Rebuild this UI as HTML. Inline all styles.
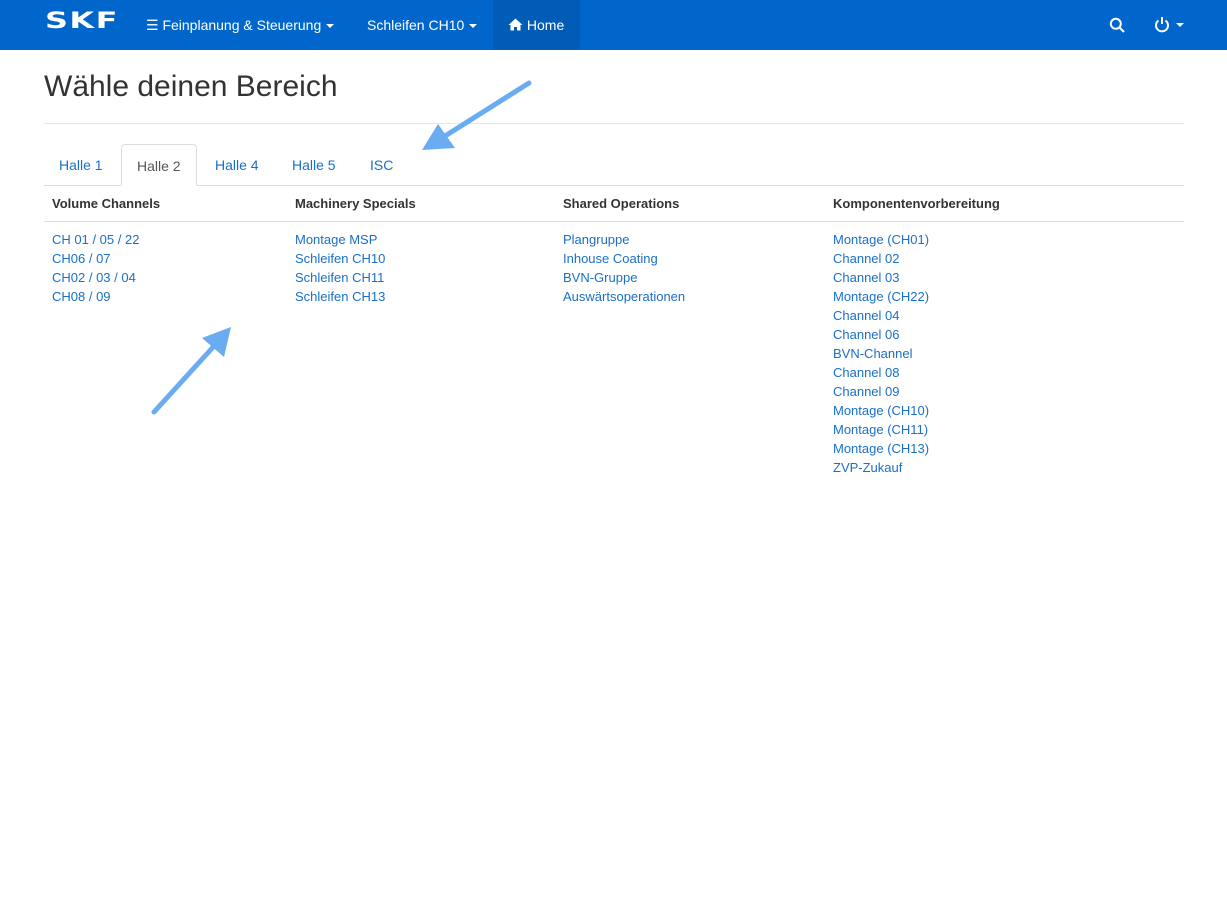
<!DOCTYPE html>
<html><head><meta charset="utf-8"><style>
*{box-sizing:border-box}
body{margin:0;font-family:"Liberation Sans",Arial,sans-serif;font-size:13px;color:#333;background:#fff;width:1227px;height:918px;overflow:hidden;position:relative}
.nav{height:50px;background:#0066cc;position:relative;color:#fff;font-size:14px}
.nav span{position:absolute;top:16px;line-height:18px;white-space:nowrap}
.home{position:absolute;left:493px;top:0;width:87px;height:50px;background:#005cb7}
.caret{display:inline-block;border-left:4px solid transparent;border-right:4px solid transparent;border-top:4px solid #fff;vertical-align:middle;margin-left:5px}
h1{position:absolute;left:44px;top:70px;margin:0;font-weight:400;font-size:30px;color:#333}
.hr{position:absolute;left:44px;right:43px;top:123px;border-top:1px solid #e5e5e5}
.tabs{position:absolute;left:44px;right:43px;top:144px;height:42px;border-bottom:1px solid #ddd}
.tab{position:absolute;top:0;height:42px;line-height:42px;font-size:14px;color:#1a6fc9;padding:0 15px}
.tab.act{border:1px solid #ddd;border-bottom-color:#fff;border-radius:4px 4px 0 0;color:#555;background:#fff;height:42px}
.th{position:absolute;top:196px;font-weight:bold;font-size:13px;color:#333}
.tline{position:absolute;left:44px;right:43px;top:221px;border-top:1px solid #ddd}
.col{position:absolute;top:230px;line-height:19px;font-size:13px}
.col a{display:block;color:#1a6fc9;text-decoration:none}
</style></head><body>
<div class="nav">
<div class="home"></div>
<span style="left:45px;top:13px;font-weight:900;font-size:22px;font-family:'DejaVu Sans',sans-serif;letter-spacing:1px;transform:scaleX(1.45);transform-origin:left">SKF</span>
<span style="left:146px">☰ Feinplanung &amp; Steuerung<i class="caret"></i></span>
<span style="left:367px">Schleifen CH10<i class="caret"></i></span>
<span style="left:508px">
<svg width="15" height="13" viewBox="0 0 15 13" style="vertical-align:-1px"><path d="M7.5 0.5L0.5 7H2.5V12.5H6V9H9V12.5H12.5V7H14.5Z" fill="#fff"/></svg> Home</span>
<svg style="position:absolute;left:1109px;top:17px" width="17" height="17" viewBox="0 0 17 17"><circle cx="6.8" cy="6.8" r="5" fill="none" stroke="#fff" stroke-width="2"/><line x1="10.5" y1="10.5" x2="15" y2="15" stroke="#fff" stroke-width="2.2"/></svg>
<svg style="position:absolute;left:1154px;top:16px" width="16" height="17" viewBox="0 0 16 17"><path d="M4.5 4.5A6 6 0 1 0 11.5 4.5" fill="none" stroke="#fff" stroke-width="2"/><line x1="8" y1="1" x2="8" y2="8" stroke="#fff" stroke-width="2"/></svg>
<i class="caret" style="position:absolute;left:1176px;top:23px;margin:0"></i>
</div>
<h1>Wähle deinen Bereich</h1>
<div class="hr"></div>
<div class="tabs">
<div class="tab" style="left:0">Halle 1</div>
<div class="tab act" style="left:77px">Halle 2</div>
<div class="tab" style="left:156px">Halle 4</div>
<div class="tab" style="left:233px">Halle 5</div>
<div class="tab" style="left:311px">ISC</div>
</div>
<div class="th" style="left:52px">Volume Channels</div>
<div class="th" style="left:295px">Machinery Specials</div>
<div class="th" style="left:563px">Shared Operations</div>
<div class="th" style="left:833px">Komponentenvorbereitung</div>
<div class="tline"></div>
<div class="col" style="left:52px"><a>CH 01 / 05 / 22</a><a>CH06 / 07</a><a>CH02 / 03 / 04</a><a>CH08 / 09</a></div>
<div class="col" style="left:295px"><a>Montage MSP</a><a>Schleifen CH10</a><a>Schleifen CH11</a><a>Schleifen CH13</a></div>
<div class="col" style="left:563px"><a>Plangruppe</a><a>Inhouse Coating</a><a>BVN-Gruppe</a><a>Auswärtsoperationen</a></div>
<div class="col" style="left:833px"><a>Montage (CH01)</a><a>Channel 02</a><a>Channel 03</a><a>Montage (CH22)</a><a>Channel 04</a><a>Channel 06</a><a>BVN-Channel</a><a>Channel 08</a><a>Channel 09</a><a>Montage (CH10)</a><a>Montage (CH11)</a><a>Montage (CH13)</a><a>ZVP-Zukauf</a></div>
<svg style="position:absolute;left:0;top:0" width="1227" height="918">
<g stroke="#6aacf2" stroke-width="5" stroke-linecap="round" fill="#6aacf2">
<line x1="529" y1="83" x2="445" y2="136"/>
<line x1="154" y1="412" x2="215" y2="345"/>
</g>
<polygon points="422,150 438,124 455,148" fill="#6aacf2"/>
<polygon points="231,327 224,357 202,338" fill="#6aacf2"/>
</svg>
</body></html>
